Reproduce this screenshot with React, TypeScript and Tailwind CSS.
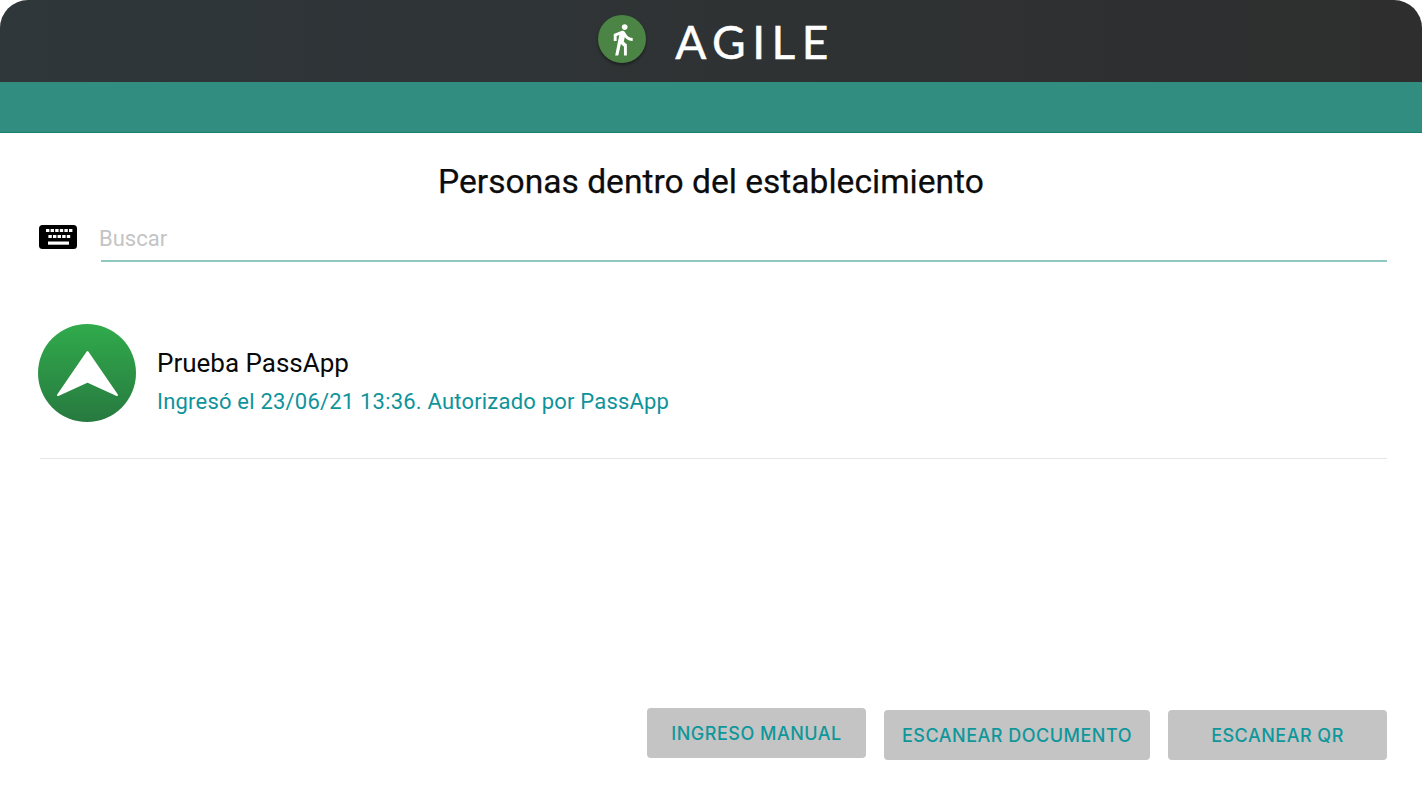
import React from 'react';
import { MdDirectionsWalk } from 'react-icons/md';

function KeyboardIcon() {
  const top = [7, 11.6, 16.2, 20.8, 25.4, 30];
  const mid = [9.4, 14, 18.6, 23.2, 27.8];
  return (
    <svg width="38" height="24" viewBox="0 0 38 24" className="shrink-0">
      <rect width="38" height="24" rx="3.5" fill="#000" />
      {top.map(x => <rect key={x} x={x} y="4" width="3.4" height="3" fill="#fff" />)}
      {mid.map(x => <rect key={x} x={x} y="10" width="3.4" height="3" fill="#fff" />)}
      <rect x="9" y="16.5" width="21" height="3.2" fill="#fff" />
    </svg>
  );
}

function ArrowAvatar() {
  return (
    <div className="w-[98px] h-[98px] shrink-0 rounded-full bg-gradient-to-b from-[#30ab4c] to-[#277a3f] flex items-center justify-center">
      <svg width="98" height="98" viewBox="0 0 98 98">
        <path d="M49.5 28 L79 71 L49.5 57.5 L20 71 Z" fill="#fff" stroke="#fff" strokeWidth="2" strokeLinejoin="round" />
      </svg>
    </div>
  );
}

function ActionButton({ label, className }: { label: string; className: string }) {
  return (
    <button className={`h-[50px] rounded-[4px] bg-[#c4c4c4] text-[#0e979b] text-[18px] font-['Inter',sans-serif] font-medium tracking-[0.5px] flex items-center justify-center ${className}`}>
      {label}
    </button>
  );
}

export default function App() {
  return (
    <div className="w-[1422px] h-[800px] bg-white overflow-hidden flex flex-col font-['Roboto',sans-serif]">
      {/* Header */}
      <header className="rounded-t-[28px] overflow-hidden shrink-0">
        <div className="h-[82px] bg-gradient-to-r from-[#2f373a] to-[#2e2e2e] flex items-center justify-center gap-[29px] pl-[11px]">
          <div className="w-[48px] h-[48px] rounded-full bg-[#4b8444] shadow-[0_2px_3px_rgba(0,0,0,0.4)] flex items-center justify-center mb-[4px]">
            <MdDirectionsWalk className="text-white w-[35px] h-[35px]" />
          </div>
          <span className="text-white text-[46px] leading-none font-['Lato',sans-serif] font-normal tracking-[6.5px] mb-[-1px] [-webkit-text-stroke:0.5px_white]">AGILE</span>
        </div>
        <div className="h-[51px] bg-[#318d80] border-b border-[#16806f]" />
      </header>

      {/* Content */}
      <main className="flex-1 flex flex-col pl-[38px] pr-[35px]">
        <h1 className="text-[33.6px] leading-[38px] font-normal text-[#0c0c0c] text-center mt-[30px] pr-[3px] [-webkit-text-stroke:0.25px_#0c0c0c]">
          Personas dentro del establecimiento
        </h1>

        <div className="flex items-start mt-[8px]">
          <div className="mt-[16px] ml-[1px]">
            <KeyboardIcon />
          </div>
          <div className="flex-1 ml-[24px] h-[53px] border-b-2 border-[#8fc8bf] text-[22px] leading-[60px] text-[#c4c4c4]">
            <span className="-ml-[2px] block">Buscar</span>
          </div>
        </div>

        <div className="flex items-center mt-[62px] pb-[36px] border-b border-[#e6e6e6] ml-[2px]">
          <div className="-ml-[2px]">
            <ArrowAvatar />
          </div>
          <div className="ml-[21px] mt-[17px]">
            <div className="text-[26px] leading-[32px] text-[#0a0a0a]">Prueba PassApp</div>
            <div className="text-[22px] leading-[28px] mt-[9px] text-[#0e939b] tracking-[0.2px]">
              Ingresó el 23/06/21 13:36. Autorizado por PassApp
            </div>
          </div>
        </div>

        <div className="flex justify-end items-start gap-[18px] mt-[249px]">
          <ActionButton label="INGRESO MANUAL" className="w-[219px]" />
          <ActionButton label="ESCANEAR DOCUMENTO" className="w-[266px] mt-[2px]" />
          <ActionButton label="ESCANEAR QR" className="w-[219px] mt-[2px]" />
        </div>
      </main>
    </div>
  );
}
